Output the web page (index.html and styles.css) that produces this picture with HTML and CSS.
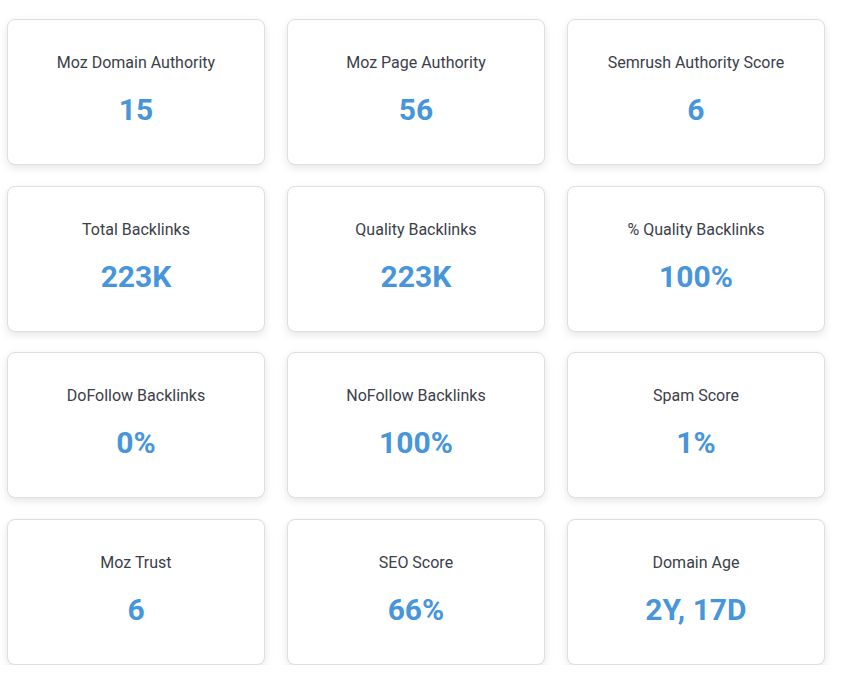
FILE: index.html
```html
<!DOCTYPE html>
<html>
<head>
<meta charset="utf-8">
<link rel="stylesheet" href="styles.css">
</head>
<body>
<div class="grid">
  <div class="card"><div class="label">Moz Domain Authority</div><div class="value">15</div></div>
  <div class="card"><div class="label">Moz Page Authority</div><div class="value">56</div></div>
  <div class="card"><div class="label">Semrush Authority Score</div><div class="value">6</div></div>
  <div class="card"><div class="label">Total Backlinks</div><div class="value">223K</div></div>
  <div class="card"><div class="label">Quality Backlinks</div><div class="value">223K</div></div>
  <div class="card"><div class="label">% Quality Backlinks</div><div class="value">100%</div></div>
  <div class="card"><div class="label">DoFollow Backlinks</div><div class="value">0%</div></div>
  <div class="card"><div class="label">NoFollow Backlinks</div><div class="value">100%</div></div>
  <div class="card"><div class="label">Spam Score</div><div class="value">1%</div></div>
  <div class="card"><div class="label">Moz Trust</div><div class="value">6</div></div>
  <div class="card"><div class="label">SEO Score</div><div class="value">66%</div></div>
  <div class="card"><div class="label">Domain Age</div><div class="value">2Y, 17D</div></div>
</div>
</body>
</html>
```
FILE: styles.css
```css
html, body {
  margin: 0;
  padding: 0;
  background: #ffffff;
  font-family: Roboto, "Liberation Sans", sans-serif;
}
.grid {
  display: grid;
  grid-template-columns: repeat(3, 258.6px);
  grid-auto-rows: 145.7px;
  column-gap: 21.4px;
  row-gap: 20.9px;
  padding: 19.3px 0 0 6.7px;
}
.card {
  box-sizing: border-box;
  background: #ffffff;
  border: 1px solid #dedede;
  border-radius: 8px;
  box-shadow: 0 3px 8px rgba(0, 0, 0, 0.1);
  display: flex;
  flex-direction: column;
  align-items: center;
  justify-content: center;
  gap: 20px;
  padding-bottom: 4px;
}
.label {
  font-size: 16px;
  line-height: 19px;
  color: #3b4049;
}
.value {
  font-size: 30px;
  line-height: 35px;
  font-weight: 700;
  color: #4796dc;
}
```
